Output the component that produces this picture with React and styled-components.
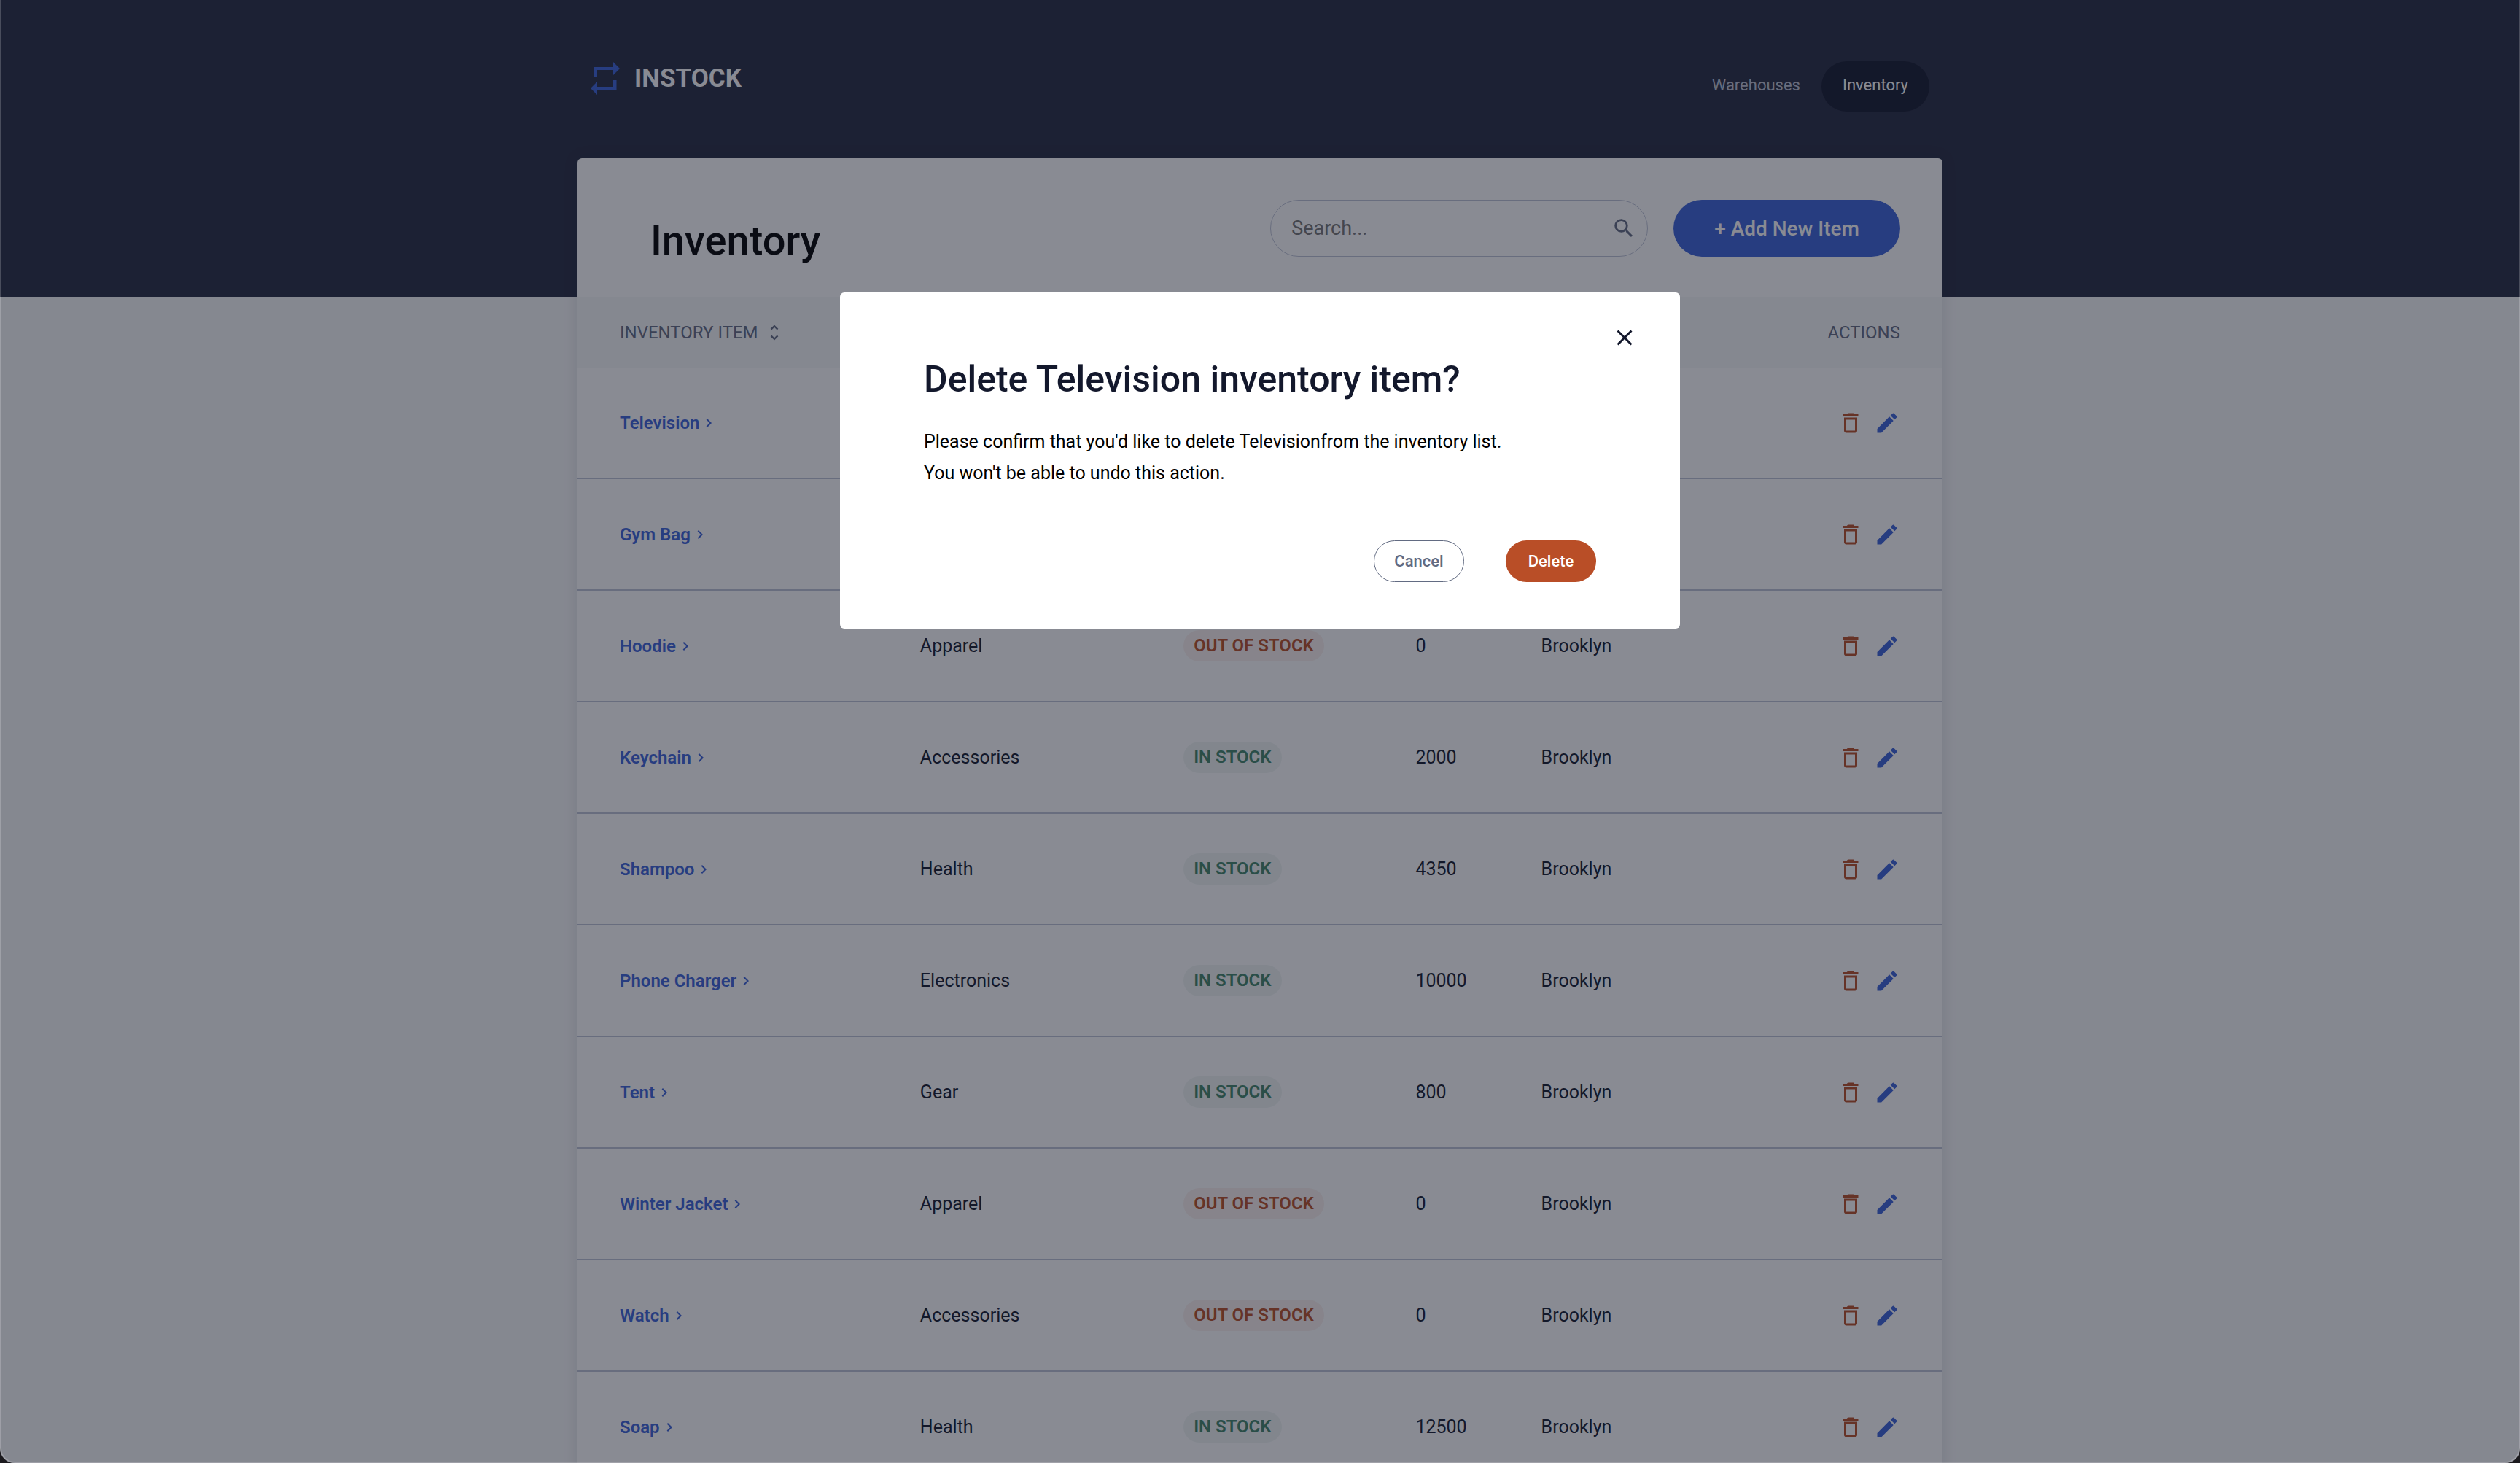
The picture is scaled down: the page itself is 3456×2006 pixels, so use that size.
import React, { useState } from "react";
import styled, { createGlobalStyle } from "styled-components";
import {
  MdChevronRight,
  MdClose,
  MdEdit,
  MdOutlineDelete,
  MdSearch,
  MdUnfoldMore,
} from "react-icons/md";

const color = {
  graphite: "#13182c",
  navy: "#252a40",
  indigo: "#3b62d8",
  red: "#b94e27",
  green: "#418468",
  slate: "#626b82",
  cloud: "#bdc3d5",
  page: "#f7f8f9",
  white: "#ffffff",
};

const GlobalStyle = createGlobalStyle`
  *, *::before, *::after { box-sizing: border-box; }
  html, body { height: 100%; }
  body {
    margin: 0;
    overflow: hidden;
    background: ${color.page};
    color: ${color.graphite};
    font-family: Roboto, "Noto Sans", sans-serif;
    font-size: 25px;
  }
  button, input { font-family: inherit; }
  h1, h2, p { margin: 0; }
`;

const Container = styled.div`
  width: 100%;
  max-width: 1872px;
  margin: 0 auto;
`;

const Header = styled.header`
  padding: 84px 0 254px;
  background: ${color.navy};
`;

const HeaderRow = styled(Container)`
  display: flex;
  justify-content: space-between;
  align-items: flex-start;
  padding: 0 18px;
`;

const Logo = styled.a`
  display: flex;
  align-items: center;
  gap: 20px;
  height: 47px;
  color: ${color.white};
  font-size: 35px;
  font-weight: 700;
  text-decoration: none;

  svg {
    width: 40px;
    height: 45px;
    fill: ${color.indigo};
  }
`;

const Nav = styled.nav`
  display: flex;
`;

const NavLink = styled.a`
  padding: 18px 29px 22px;
  border-radius: 35px;
  background: ${(p) => (p.$active ? color.graphite : "transparent")};
  color: ${(p) => (p.$active ? color.white : color.cloud)};
  font-size: 22px;
  line-height: 29px;
  text-decoration: none;
`;

const Card = styled(Container).attrs({ as: "main" })`
  display: block;
  margin-top: -190px;
  border-radius: 6px;
  background: ${color.white};
  box-shadow: 0 0 20px rgba(19, 24, 44, 0.12);
`;

const Toolbar = styled.div`
  display: flex;
  align-items: center;
  gap: 35px;
  padding: 57px 58px 55px 100px;
`;

const PageTitle = styled.h1`
  flex: 1;
  align-self: flex-end;
  color: #000;
  font-size: 56px;
  font-weight: 500;
  line-height: 44px;
`;

const SearchBox = styled.label`
  display: flex;
  align-items: center;
  width: 518px;
  height: 78px;
  padding: 0 28px;
  border: 1px solid ${color.cloud};
  border-radius: 39px;
  color: ${color.slate};

  svg {
    width: 34px;
    height: 34px;
    margin-right: -13px;
  }
`;

const SearchInput = styled.input`
  flex: 1;
  min-width: 0;
  padding: 0;
  border: 0;
  outline: 0;
  background: transparent;
  font-size: 27px;
`;

const AddButton = styled.button`
  height: 78px;
  padding: 0 56px;
  border: 0;
  border-radius: 39px;
  background: ${color.indigo};
  color: ${color.white};
  font-size: 28px;
  font-weight: 500;
`;

const Table = styled.table`
  width: 100%;
  table-layout: fixed;
  border-collapse: separate;
  border-spacing: 0;
`;

const HeadCell = styled.th`
  width: ${(p) => p.$width};
  height: 97px;
  padding: 0;
  background: ${color.page};
  color: ${color.slate};
  font-size: 24px;
  font-weight: 400;
  text-align: left;

  &:first-child { padding-left: 58px; }
  &:last-child { padding-right: 58px; text-align: right; }
`;

const SortButton = styled.button`
  display: flex;
  align-items: center;
  gap: 8px;
  padding: 0;
  border: 0;
  background: none;
  color: inherit;
  font-size: inherit;

  svg {
    width: 28px;
    height: 28px;
  }
`;

const Cell = styled.td`
  height: 153px;
  padding: 0;
  border-bottom: 2px solid ${color.cloud};

  &:first-child { padding-left: 58px; }
  &:last-child { padding-right: 58px; }
`;

const ItemLink = styled.a`
  display: inline-flex;
  align-items: center;
  gap: 1px;
  color: ${color.indigo};
  font-size: 24px;
  font-weight: 600;
  text-decoration: none;

  svg {
    width: 24px;
    height: 24px;
  }
`;

const StockTag = styled.span`
  display: inline-block;
  padding: 0 14px;
  border-radius: 22px;
  background: ${(p) => (p.$inStock ? "rgba(65, 132, 104, 0.08)" : "rgba(185, 78, 39, 0.08)")};
  color: ${(p) => (p.$inStock ? color.green : color.red)};
  font-size: 24px;
  font-weight: 600;
  line-height: 43px;
  vertical-align: middle;
`;

const Actions = styled.div`
  display: flex;
  justify-content: flex-end;
  gap: 14px;
`;

const IconButton = styled.button`
  display: flex;
  padding: 0;
  border: 0;
  background: none;
  color: ${(p) => p.$color};

  svg {
    width: 36px;
    height: 36px;
  }
`;

const Overlay = styled.div`
  position: fixed;
  inset: 0;
  display: flex;
  justify-content: center;
  align-items: flex-start;
  padding-top: 20vh;
  background: rgba(19, 24, 39, 0.5);
`;

const Modal = styled.section`
  width: calc(100% / 3);
  min-width: 900px;
  padding: 44px 115px 64px;
  border-radius: 6px;
  background: ${color.white};
`;

const CloseRow = styled.div`
  display: flex;
  justify-content: flex-end;
  margin-right: -57px;
`;

const ModalTitle = styled.h2`
  margin-top: 10px;
  font-size: 50px;
  font-weight: 500;
  line-height: 58px;
`;

const ModalText = styled.p`
  margin-top: 35px;
  color: #000;
  line-height: 43px;
`;

const ModalButtons = styled.div`
  display: flex;
  justify-content: flex-end;
  gap: 57px;
  margin-top: 71px;
`;

const ModalButton = styled.button`
  width: 124px;
  height: 57px;
  padding: 0;
  border: ${(p) => (p.$danger ? "0" : `1px solid ${color.slate}`)};
  border-radius: 29px;
  background: ${(p) => (p.$danger ? color.red : color.white)};
  color: ${(p) => (p.$danger ? color.white : color.slate)};
  font-size: 22px;
  font-weight: 500;
`;

/* Edge of the browser window, rounded at the bottom. */
const WindowEdge = styled.div`
  position: fixed;
  inset: 0;
  border: 2px solid rgba(255, 255, 255, 0.2);
  border-top: 0;
  border-radius: 0 0 20px 20px;
  box-shadow: 0 0 0 20px #1b1a1e;
  pointer-events: none;
`;

const ITEMS = [
  ["Television", "Electronics", 500, "Manhattan"],
  ["Gym Bag", "Gear", 0, "Manhattan"],
  ["Hoodie", "Apparel", 0, "Brooklyn"],
  ["Keychain", "Accessories", 2000, "Brooklyn"],
  ["Shampoo", "Health", 4350, "Brooklyn"],
  ["Phone Charger", "Electronics", 10000, "Brooklyn"],
  ["Tent", "Gear", 800, "Brooklyn"],
  ["Winter Jacket", "Apparel", 0, "Brooklyn"],
  ["Watch", "Accessories", 0, "Brooklyn"],
  ["Soap", "Health", 12500, "Brooklyn"],
];

const COLUMNS = [
  ["Inventory item", "25.1%"],
  ["Category", "19.3%"],
  ["Status", "17%"],
  ["Qty", "9.2%"],
  ["Warehouse", "15%"],
];

function LogoMark() {
  return (
    <svg viewBox="0 0 40 45" aria-hidden="true">
      <path d="M4.500 7H31V0l9 9-9 9v-7H9v9H4.500z" />
      <path d="M35.500 38H9v7l-9-9 9-9v7h22v-9h4.500z" />
    </svg>
  );
}

function ItemRow({ name, category, quantity, warehouse, onDelete }) {
  const inStock = quantity > 0;
  return (
    <tr>
      <Cell>
        <ItemLink href="#item">
          {name}
          <MdChevronRight aria-hidden="true" />
        </ItemLink>
      </Cell>
      <Cell>{category}</Cell>
      <Cell>
        <StockTag $inStock={inStock}>{inStock ? "IN STOCK" : "OUT OF STOCK"}</StockTag>
      </Cell>
      <Cell>{quantity}</Cell>
      <Cell>{warehouse}</Cell>
      <Cell>
        <Actions>
          <IconButton type="button" $color={color.red} aria-label={`Delete ${name}`} onClick={onDelete}>
            <MdOutlineDelete />
          </IconButton>
          <IconButton type="button" $color={color.indigo} aria-label={`Edit ${name}`}>
            <MdEdit />
          </IconButton>
        </Actions>
      </Cell>
    </tr>
  );
}

function DeleteModal({ name, onClose }) {
  return (
    <Overlay>
      <Modal role="dialog" aria-modal="true" aria-labelledby="delete-title">
        <CloseRow>
          <IconButton type="button" $color={color.graphite} aria-label="Close" onClick={onClose}>
            <MdClose />
          </IconButton>
        </CloseRow>
        <ModalTitle id="delete-title">Delete {name} inventory item?</ModalTitle>
        <ModalText>
          Please confirm that you'd like to delete {name}from the inventory list.
          <br />
          You won't be able to undo this action.
        </ModalText>
        <ModalButtons>
          <ModalButton type="button" onClick={onClose}>Cancel</ModalButton>
          <ModalButton type="button" $danger onClick={onClose}>Delete</ModalButton>
        </ModalButtons>
      </Modal>
    </Overlay>
  );
}

export default function App() {
  const [deleting, setDeleting] = useState("Television");
  return (
    <>
      <GlobalStyle />
      <Header>
        <HeaderRow>
          <Logo href="#home">
            <LogoMark />
            INSTOCK
          </Logo>
          <Nav>
            <NavLink href="#warehouses">Warehouses</NavLink>
            <NavLink href="#inventory" $active>Inventory</NavLink>
          </Nav>
        </HeaderRow>
      </Header>
      <Card>
        <Toolbar>
          <PageTitle>Inventory</PageTitle>
          <SearchBox>
            <SearchInput type="text" placeholder="Search..." aria-label="Search" />
            <MdSearch aria-hidden="true" />
          </SearchBox>
          <AddButton type="button">+ Add New Item</AddButton>
        </Toolbar>
        <Table>
          <thead>
            <tr>
              {COLUMNS.map(([label, width]) => (
                <HeadCell key={label} scope="col" $width={width}>
                  <SortButton type="button">
                    {label.toUpperCase()}
                    <MdUnfoldMore aria-hidden="true" />
                  </SortButton>
                </HeadCell>
              ))}
              <HeadCell scope="col">ACTIONS</HeadCell>
            </tr>
          </thead>
          <tbody>
            {ITEMS.map(([name, category, quantity, warehouse]) => (
              <ItemRow
                key={name}
                name={name}
                category={category}
                quantity={quantity}
                warehouse={warehouse}
                onDelete={() => setDeleting(name)}
              />
            ))}
          </tbody>
        </Table>
      </Card>
      {deleting && <DeleteModal name={deleting} onClose={() => setDeleting(null)} />}
      <WindowEdge />
    </>
  );
}
